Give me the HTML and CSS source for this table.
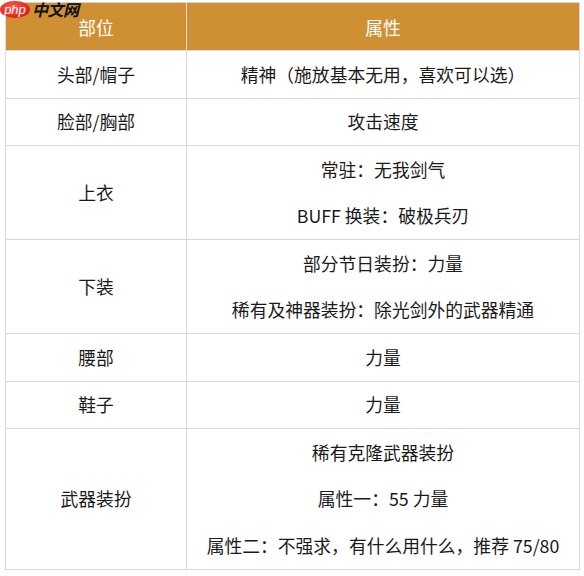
FILE: index.html
```html
<!DOCTYPE html>
<html lang="zh">
<head>
<meta charset="utf-8">
<title>部位属性</title>
<link rel="stylesheet" href="styles.css">
</head>
<body>
<div class="page">
  <div class="logo">
    <span class="logo-php">php</span><span class="logo-cn">中文网</span>
  </div>
  <table class="tbl">
    <thead>
      <tr><th class="c1">部位</th><th class="c2">属性</th></tr>
    </thead>
    <tbody>
      <tr><td>头部/帽子</td><td><p>精神（施放基本无用，喜欢可以选）</p></td></tr>
      <tr><td>脸部/胸部</td><td><p>攻击速度</p></td></tr>
      <tr><td>上衣</td><td><p>常驻：无我剑气</p><p>BUFF 换装：破极兵刃</p></td></tr>
      <tr><td>下装</td><td><p>部分节日装扮：力量</p><p>稀有及神器装扮：除光剑外的武器精通</p></td></tr>
      <tr><td>腰部</td><td><p>力量</p></td></tr>
      <tr><td>鞋子</td><td><p>力量</p></td></tr>
      <tr><td>武器装扮</td><td><p>稀有克隆武器装扮</p><p>属性一：55 力量</p><p>属性二：不强求，有什么用什么，推荐 75/80</p></td></tr>
    </tbody>
  </table>
</div>
</body>
</html>
```
FILE: styles.css
```css
html, body {
  margin: 0;
  padding: 0;
  background: #fff;
}
.page {
  position: relative;
  padding: 2px 4px 0 5px;
  font-family: "Noto Sans CJK SC", "Noto Sans", sans-serif;
  color: #1a1a1a;
}
.tbl {
  width: 575px;
  border-collapse: collapse;
  table-layout: fixed;
  font-size: 17.8px;
}
.tbl th, .tbl td {
  border: 1px solid #d9d9d9;
  text-align: center;
  vertical-align: middle;
  font-weight: normal;
}
.tbl th {
  background: #cf9033;
  color: #fff;
  height: 47px;
  padding: 0;
  border-top-color: #d4d4d4;
}
.c1 { width: 180px; }
.tbl td {
  padding: 11.5px 6px;
  line-height: 23.5px;
}
.tbl td p {
  margin: 0;
}
.tbl td p + p {
  margin-top: 23px;
}
.logo {
  position: absolute;
  left: 0;
  top: 0;
  display: flex;
  align-items: center;
  gap: 2px;
}
.logo-php {
  display: inline-block;
  background: radial-gradient(ellipse at 40% 35%, #ff5a4a, #e0201a 70%);
  color: #fff;
  font-family: "Liberation Sans", sans-serif;
  font-style: italic;
  font-size: 13px;
  line-height: 17px;
  border-radius: 50%;
  width: 30px;
  text-align: center;
}
.logo-cn {
  font-family: "Noto Sans CJK SC", sans-serif;
  font-style: italic;
  font-weight: bold;
  font-size: 16px;
  line-height: 19px;
  padding-right: 2px;
  color: #111;
  letter-spacing: -0.5px;
}
```
